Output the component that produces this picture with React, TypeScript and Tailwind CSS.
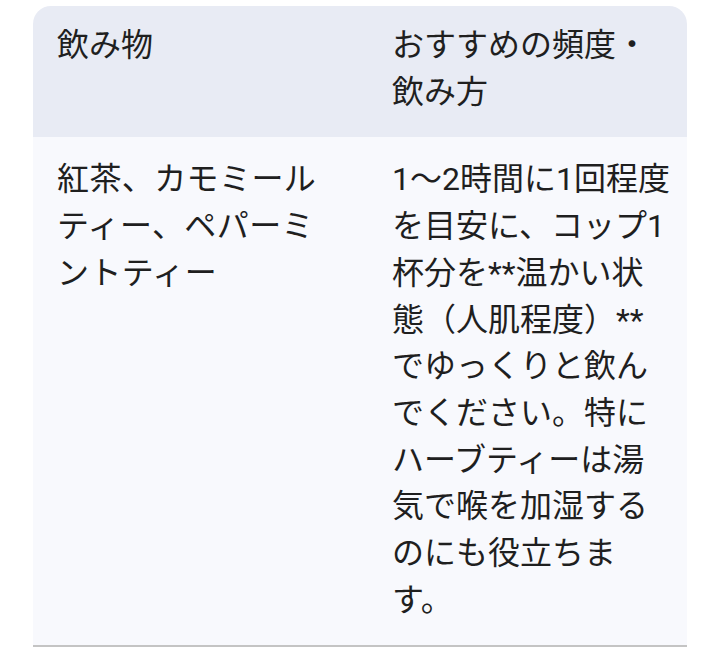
const cellFont = {
  fontFamily: 'Roboto, "Noto Sans CJK JP", "Noto Sans", sans-serif',
}

const rows = [
  {
    drink: '紅茶、カモミールティー、ペパーミントティー',
    how: '1〜2時間に1回程度を目安に、コップ1杯分を**温かい状態（人肌程度）**でゆっくりと飲んでください。特にハーブティーは湯気で喉を加湿するのにも役立ちます。',
  },
]

export default function App() {
  return (
    <div className="w-[720px] h-[652px] bg-white overflow-hidden pt-[6px]">
      <div className="ml-[33px] w-[654px]" style={cellFont}>
        <table className="w-full border-collapse table-fixed text-[32px] leading-[46.7px] text-[#1f1f1f]">
          <colgroup>
            <col className="w-[335px]" />
            <col className="w-[319px]" />
          </colgroup>
          <thead>
            <tr className="bg-[#e8ebf4]">
              <th className="text-left font-normal align-top pl-[24px] pr-[40px] pt-[16px] pb-[22px] rounded-tl-[18px]">
                飲み物
              </th>
              <th className="text-left font-normal align-top pl-[24px] pr-[15px] pt-[16px] pb-[22px] rounded-tr-[18px]">
                おすすめの頻度・飲み方
              </th>
            </tr>
          </thead>
          <tbody>
            {rows.map(row => (
              <tr key={row.drink} className="bg-[#f8f9fd] border-b-2 border-[#c4c4c4]">
                <td className="align-top pl-[24px] pr-[40px] pt-[19px] pb-[22px] tracking-[0.4px]">
                  {row.drink}
                </td>
                <td className="align-top pl-[24px] pr-[15px] pt-[19px] pb-[22px]">
                  {row.how}
                </td>
              </tr>
            ))}
          </tbody>
        </table>
      </div>
    </div>
  )
}
